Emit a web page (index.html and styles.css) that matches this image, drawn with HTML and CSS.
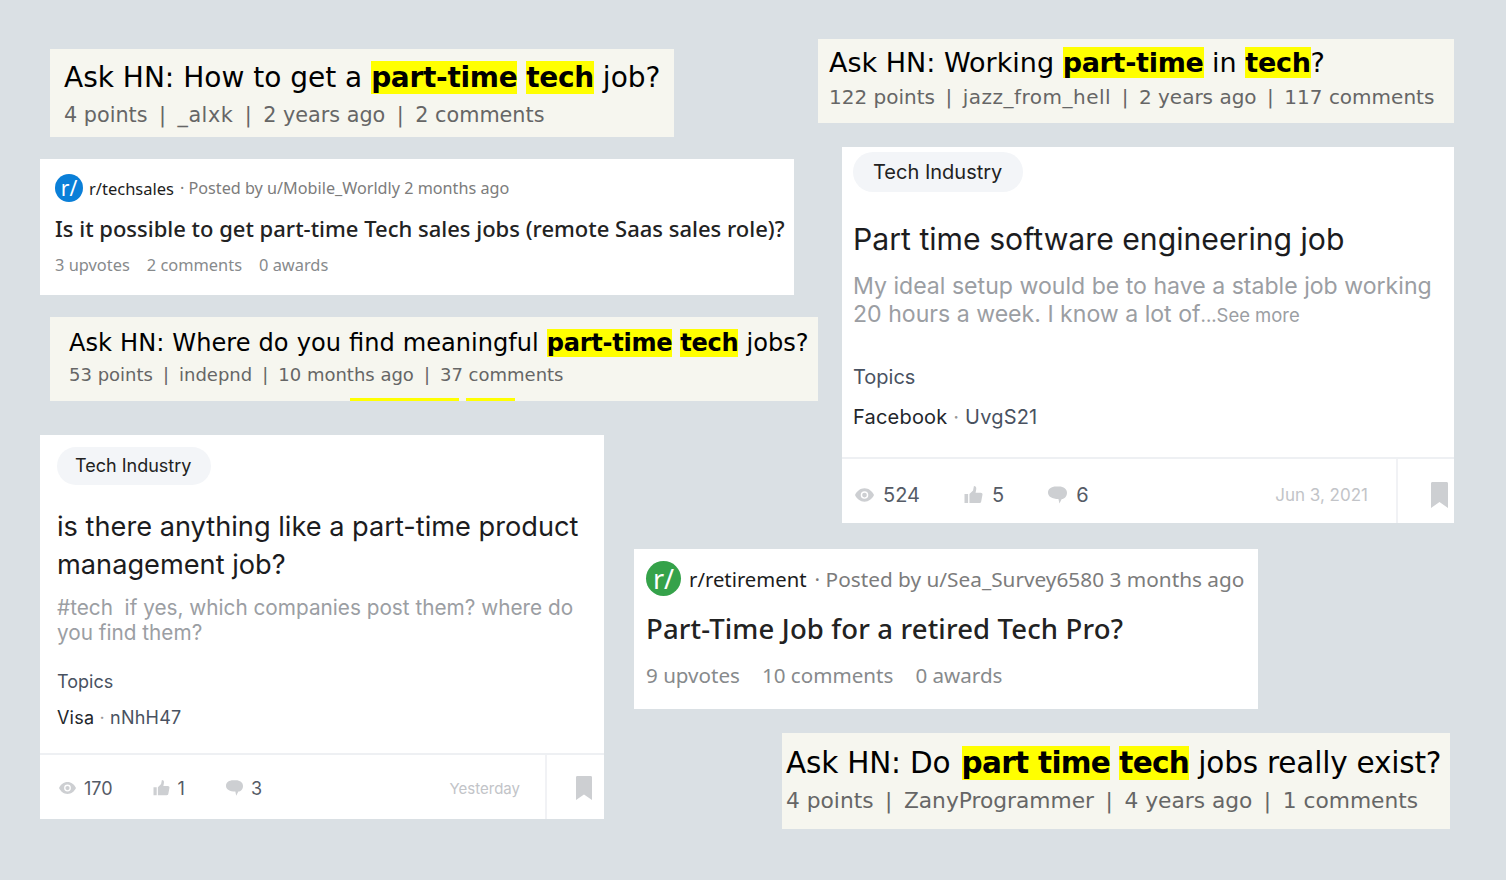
FILE: index.html
```html
<!DOCTYPE html>
<html lang="en">
<head>
  <meta charset="UTF-8">
  <title>Part-time tech jobs</title>
  <link rel="stylesheet" href="styles.css">
</head>
<body>
  <svg class="defs" width="0" height="0">
    <symbol id="i-eye" viewBox="0 0 20 14"><path fill-rule="evenodd" d="M10 0C5.500 0 2 3 0 7c2 4 5.500 7 10 7s8-3 10-7c-2-4-5.500-7-10-7zm0 3a4 4 0 1 1 0 8 4 4 0 0 1 0-8zm0 1.500a2.500 2.500 0 1 0 0 5 2.500 2.500 0 0 0 0-5z"/></symbol>
    <symbol id="i-thumb" viewBox="0 0 20 20"><path d="M0 9h4v10H0zM5.500 9 9.500 5 10.500 0c2 0 3 1.500 2.500 4l-.7 3.500H18c1.300 0 2 .9 2 2l-1.500 8c-.2 1-1 1.500-2 1.500H5.500z"/></symbol>
    <symbol id="i-bubble" viewBox="0 0 20 18"><path d="M8.500 0h3C16.500 0 20 2.800 20 6.500S17.300 13 14.500 13.200L12 18l-1-4.800C4.500 13 0 10.500 0 6.500S3.500 0 8.500 0z"/></symbol>
    <symbol id="i-mark" viewBox="0 0 18 26" preserveAspectRatio="none"><path d="M1.500 0h15c.9 0 1.500.6 1.500 1.500V26l-9-6-9 6V1.500C0 .6.600 0 1.500 0z"/></symbol>
  </svg>

  <!-- hacker news -->
  <div class="hn hn-a">
    <div class="hn-title">Ask HN: How to get a <b>part-time</b> <b>tech</b> job?</div>
    <div class="hn-meta"><span>4 points</span><span>|</span><span class="hn-user">_alxk</span><span>|</span><span>2 years ago</span><span>|</span><span>2 comments</span></div>
  </div>
  <div class="hn hn-b">
    <div class="hn-title">Ask HN: Working <b>part-time</b> in <b>tech</b>?</div>
    <div class="hn-meta"><span>122 points</span><span>|</span><span class="hn-user">jazz_from_hell</span><span>|</span><span>2 years ago</span><span>|</span><span>117 comments</span></div>
  </div>
  <div class="hn hn-c">
    <div class="hn-title">Ask HN: Where do you find meaningful <b>part-time</b> <b>tech</b> jobs?</div>
    <div class="hn-meta"><span>53 points</span><span>|</span><span>indepnd</span><span>|</span><span>10 months ago</span><span>|</span><span>37 comments</span></div>
    <i class="strip strip-a"></i>
    <i class="strip strip-b"></i>
  </div>
  <div class="hn hn-d">
    <div class="hn-title">Ask HN: Do <b>part time</b> <b>tech</b> jobs really exist?</div>
    <div class="hn-meta"><span>4 points</span><span>|</span><span>ZanyProgrammer</span><span>|</span><span>4 years ago</span><span>|</span><span>1 comments</span></div>
  </div>

  <!-- reddit -->
  <div class="rd rd-a">
    <div class="rd-head">
      <span class="rd-logo">r/</span>
      <span class="rd-sub">r/techsales</span>
      <span class="rd-by">· Posted by u/Mobile_Worldly 2 months ago</span>
    </div>
    <div class="rd-title">Is it possible to get part-time Tech sales jobs (remote Saas sales role)?</div>
    <div class="rd-meta"><span>3 upvotes</span><span>2 comments</span><span>0 awards</span></div>
  </div>
  <div class="rd rd-b">
    <div class="rd-head">
      <span class="rd-logo">r/</span>
      <span class="rd-sub">r/retirement</span>
      <span class="rd-by">· Posted by u/Sea_Survey6580 3 months ago</span>
    </div>
    <div class="rd-title">Part-Time Job for a retired Tech Pro?</div>
    <div class="rd-meta"><span>9 upvotes</span><span>10 comments</span><span>0 awards</span></div>
  </div>

  <!-- blind -->
  <div class="bl bl-a">
    <div class="bl-body">
      <span class="bl-tag">Tech Industry</span>
      <div class="bl-title">is there anything like a part-time product management job?</div>
      <div class="bl-text">#tech&nbsp; if yes, which companies post them? where do you find them?</div>
      <div class="bl-topics">Topics</div>
      <div class="bl-company">Visa <em>·</em> <span>nNhH47</span></div>
    </div>
    <div class="bl-foot">
      <div class="bl-stats">
        <span class="stat stat-view"><svg><use href="#i-eye"/></svg>170</span>
        <span class="stat stat-like"><svg><use href="#i-thumb"/></svg>1</span>
        <span class="stat"><svg><use href="#i-bubble"/></svg>3</span>
        <span class="bl-date">Yesterday</span>
      </div>
      <div class="bl-save"><svg><use href="#i-mark"/></svg></div>
    </div>
  </div>
  <div class="bl bl-b">
    <div class="bl-body">
      <span class="bl-tag">Tech Industry</span>
      <div class="bl-title">Part time software engineering job</div>
      <div class="bl-text">My ideal setup would be to have a stable job working 20 hours a week. I know a lot of<small>...See more</small></div>
      <div class="bl-topics">Topics</div>
      <div class="bl-company">Facebook <em>·</em> <span>UvgS21</span></div>
    </div>
    <div class="bl-foot">
      <div class="bl-stats">
        <span class="stat stat-view"><svg><use href="#i-eye"/></svg>524</span>
        <span class="stat stat-like"><svg><use href="#i-thumb"/></svg>5</span>
        <span class="stat"><svg><use href="#i-bubble"/></svg>6</span>
        <span class="bl-date">Jun 3, 2021</span>
      </div>
      <div class="bl-save"><svg><use href="#i-mark"/></svg></div>
    </div>
  </div>
</body>
</html>
```

FILE: styles.css
```css
html, body {
  margin: 0;
  height: 100%;
}
body {
  position: relative;
  width: 1506px;
  height: 880px;
  overflow: hidden;
  background: #dae0e4;
}
.defs {
  position: absolute;
}

/* hacker news clips */
.hn {
  position: absolute;
  box-sizing: border-box;
  background: #f6f6ef;
  font-family: "DejaVu Sans", sans-serif;
  white-space: nowrap;
}
.hn-title {
  color: #000;
}
.hn-title b {
  background: #ff0;
  letter-spacing: -0.3px;
}
.hn-meta {
  display: flex;
  color: #666;
}
.hn-user {
  letter-spacing: 0.500px;
}
.hn-a {
  left: 50px;
  top: 49px;
  width: 624px;
  height: 88px;
  padding: 11px 0 0 14px;
}
.hn-a .hn-title {
  font-size: 28px;
  line-height: 36px;
}
.hn-a .hn-meta {
  gap: 11.500px;
  font-size: 20.750px;
  line-height: 39px;
}
.hn-b {
  left: 818px;
  top: 39px;
  width: 636px;
  height: 84px;
  padding: 7px 0 0 11px;
}
.hn-b .hn-title {
  font-size: 27px;
  line-height: 34px;
}
.hn-b .hn-meta {
  gap: 10.500px;
  font-size: 20px;
  line-height: 34px;
}
.hn-c {
  left: 50px;
  top: 317px;
  width: 768px;
  height: 84px;
  padding: 9px 0 0 19px;
}
.hn-c .hn-title {
  font-size: 24.100px;
  word-spacing: 0.400px;
  line-height: 34px;
}
.hn-c .hn-meta {
  gap: 10px;
  font-size: 18px;
  line-height: 30px;
}
.hn-d {
  left: 782px;
  top: 733px;
  width: 668px;
  height: 96px;
  padding: 11px 0 0 4px;
}
.hn-d .hn-title {
  font-size: 29.500px;
  letter-spacing: -0.200px;
  line-height: 38px;
}
.hn-d .hn-title b {
  letter-spacing: -0.700px;
}
.hn-d .hn-title b:first-child {
  margin-left: 2px;
}
.hn-d .hn-meta {
  gap: 11.500px;
  font-size: 21.750px;
  line-height: 38px;
}
.strip {
  position: absolute;
  bottom: 0;
  height: 3px;
  background: #ff0;
}
.strip-a {
  left: 300px;
  width: 109px;
}
.strip-b {
  left: 416px;
  width: 49px;
}

/* reddit clips */
.rd {
  position: absolute;
  box-sizing: border-box;
  background: #fff;
  font-family: "Noto Sans", sans-serif;
  white-space: nowrap;
}
.rd-head {
  display: flex;
  align-items: center;
}
.rd-logo {
  display: flex;
  align-items: center;
  justify-content: center;
  border-radius: 50%;
  color: #fff;
}
.rd-sub {
  color: #1c1c1c;
}
.rd-by {
  color: #7c7c7c;
}
.rd-title {
  color: #222;
  font-weight: 500;
}
.rd-meta {
  display: flex;
  color: #878a8c;
}
.rd-a {
  left: 40px;
  top: 159px;
  width: 754px;
  height: 136px;
  padding: 15px 0 0 15px;
}
.rd-a .rd-head {
  gap: 6px;
}
.rd-a .rd-sub {
  font-size: 16.500px;
}
.rd-a .rd-by {
  font-size: 16.200px;
}
.rd-a .rd-logo {
  width: 28px;
  height: 28px;
  background: #0a7fd8;
  font-size: 21px;
}
.rd-a .rd-title {
  margin-top: 11px;
  font-size: 22px;
  line-height: 30px;
}
.rd-a .rd-meta {
  gap: 17px;
  margin-top: 11px;
  font-size: 16.400px;
  line-height: 22px;
}
.rd-b {
  left: 634px;
  top: 549px;
  width: 624px;
  height: 160px;
  padding: 12px 0 0 12px;
}
.rd-b .rd-head {
  gap: 8px;
}
.rd-b .rd-sub {
  font-size: 20.300px;
}
.rd-b .rd-by {
  font-size: 20.800px;
}
.rd-b .rd-logo {
  width: 35px;
  height: 35px;
  background: #35a24a;
  font-size: 27px;
}
.rd-b .rd-title {
  margin-top: 15px;
  font-size: 27.500px;
  letter-spacing: 0.150px;
  line-height: 36px;
}
.rd-b .rd-meta {
  gap: 22px;
  margin-top: 14px;
  font-size: 20.600px;
  line-height: 28px;
}

/* blind clips */
.bl {
  position: absolute;
  display: flex;
  flex-direction: column;
  background: #fff;
  font-family: Inter, sans-serif;
}
.bl-body {
  flex: 1;
  box-sizing: border-box;
  border-bottom: 2px solid #eef0f3;
}
.bl-tag {
  display: inline-block;
  border-radius: 20px;
  background: #f3f5f8;
  color: #222;
}
.bl-title {
  color: #1c1c1e;
}
.bl-text {
  color: #9b9ea3;
}
.bl-text small {
  font-size: 0.800em;
}
.bl-topics {
  color: #495261;
}
.bl-company {
  letter-spacing: 0.200px;
  color: #22262b;
}
.bl-company em {
  color: #999;
  font-style: normal;
}
.bl-company span {
  color: #495261;
}
.bl-foot {
  display: flex;
}
.bl-stats {
  flex: 1;
  display: flex;
  align-items: center;
  border-right: 2px solid #f1f2f5;
}
.stat {
  display: flex;
  align-items: center;
  color: #555b66;
}
.stat svg, .bl-save svg {
  fill: #cdcfd2;
}
.bl-date {
  margin-left: auto;
  color: #c2c4c8;
}
.bl-save {
  display: flex;
  align-items: center;
  justify-content: flex-end;
  box-sizing: border-box;
}

.bl-a {
  left: 40px;
  top: 435px;
  width: 564px;
  height: 384px;
}
.bl-a .bl-body {
  padding: 12px 17px 0;
}
.bl-a .bl-tag {
  padding: 9px 20px 9px 18px;
  font-size: 18px;
  line-height: 20px;
}
.bl-a .bl-title {
  margin-top: 23px;
  font-size: 27.200px;
  line-height: 38px;
}
.bl-a .bl-text {
  margin-top: 11px;
  font-size: 20.750px;
  line-height: 25px;
}
.bl-a .bl-topics {
  margin-top: 25px;
  font-size: 18px;
  line-height: 24px;
}
.bl-a .bl-company {
  margin-top: 12px;
  font-size: 18px;
  line-height: 24px;
}
.bl-a .bl-foot {
  height: 64px;
}
.bl-a .bl-stats {
  padding: 2px 25px 0 19px;
}
.bl-a .stat {
  gap: 8px;
  font-size: 18px;
  margin-right: 40px;
}
.bl-a .stat-like {
  margin-right: 41px;
}
.bl-a .bl-date {
  font-size: 15px;
}
.bl-a .stat svg {
  width: 17px;
  height: 16px;
}
.bl-a .bl-save {
  width: 57px;
  padding: 2px 12px 0 0;
}
.bl-a .bl-save svg {
  width: 16px;
  height: 24px;
}

.bl-b {
  left: 842px;
  top: 147px;
  width: 612px;
  height: 376px;
}
.bl-b .bl-body {
  padding: 5px 11px 0;
}
.bl-b .bl-tag {
  padding: 8px 21px 8px 20px;
  font-size: 20px;
  line-height: 24px;
}
.bl-b .bl-title {
  margin-top: 27px;
  font-size: 30.200px;
  line-height: 40px;
}
.bl-b .bl-text {
  margin-top: 13px;
  font-size: 23.100px;
  line-height: 28px;
}
.bl-b .bl-topics {
  margin-top: 34px;
  font-size: 20px;
  line-height: 28px;
}
.bl-b .bl-company {
  margin-top: 12px;
  font-size: 20px;
  line-height: 28px;
}
.bl-b .bl-foot {
  height: 64px;
}
.bl-b .bl-stats {
  padding: 8px 28px 0 13px;
}
.bl-b .stat {
  gap: 9px;
  font-size: 20px;
  margin-right: 44px;
}
.bl-b .bl-date {
  font-size: 17px;
}
.bl-b .stat svg {
  width: 19px;
  height: 18px;
}
.bl-b .bl-save {
  width: 56px;
  padding: 8px 6px 0 0;
}
.bl-b .bl-save svg {
  width: 17px;
  height: 26px;
}
```
